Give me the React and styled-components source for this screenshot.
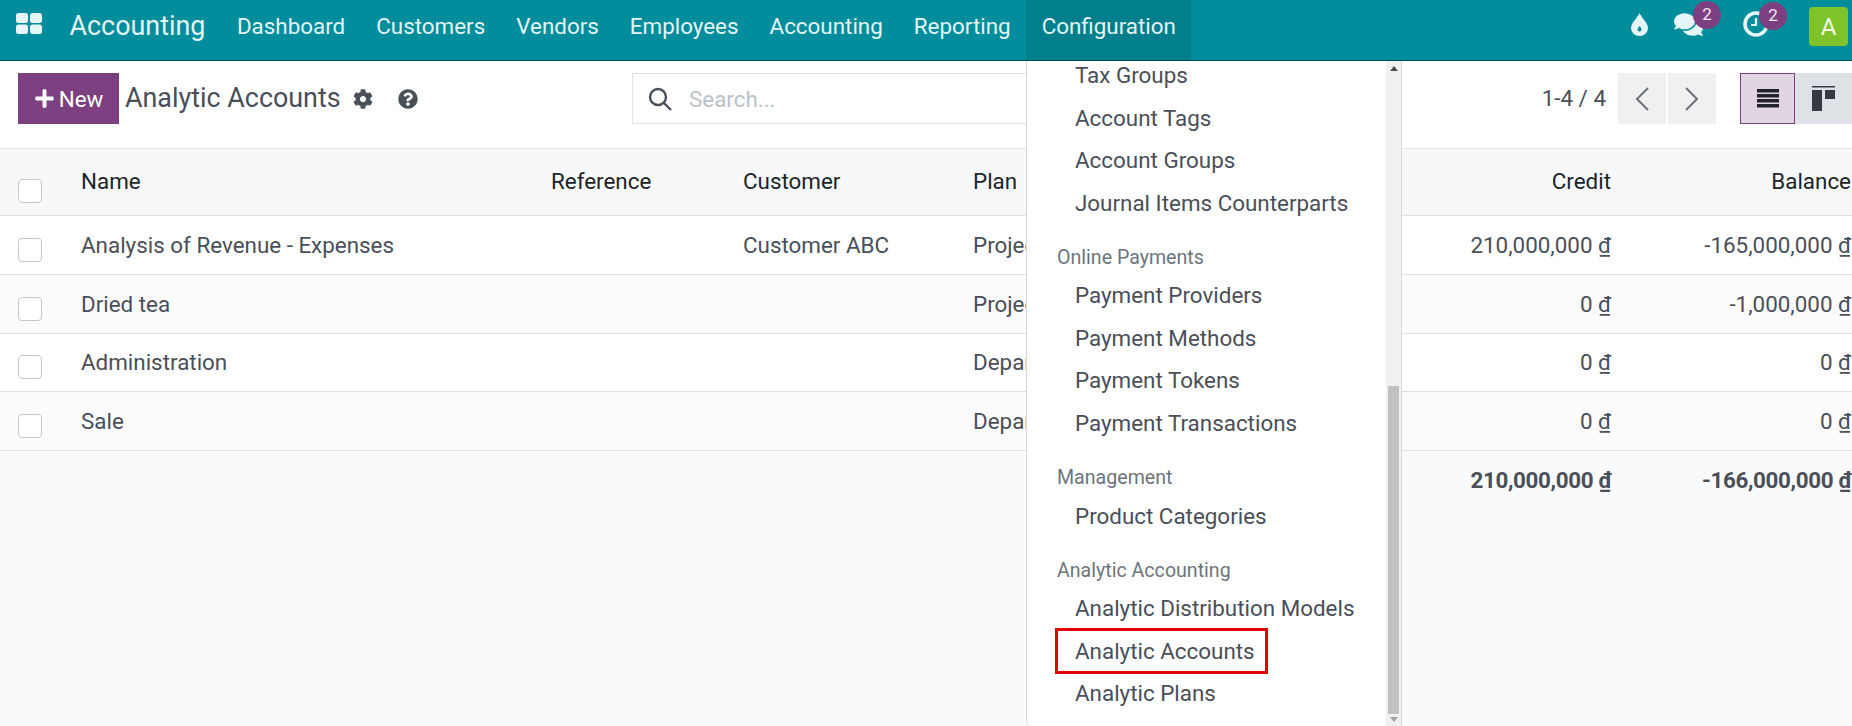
import React from "react";
import styled, { createGlobalStyle } from "styled-components";
import { FaPlus, FaCog, FaQuestionCircle, FaComments } from "react-icons/fa";

const GlobalStyle = createGlobalStyle`
  html, body {
    margin: 0;
    padding: 0;
    overflow: hidden;
    background: #f9fafb;
  }
  * {
    box-sizing: border-box;
  }
  body {
    font-family: Roboto, "Liberation Sans", sans-serif;
    font-size: 22.4px;
    color: #4a4f59;
  }
`;

const Page = styled.div`
  position: relative;
  width: 1852px;
  height: 726px;
  overflow: hidden;
`;

/* top bar */
const Navbar = styled.header`
  display: flex;
  align-items: center;
  height: 61px;
  padding: 0 4px 0 16px;
  background: #018d9b;
  border-bottom: 1px solid #014a52;
  color: #e2f5f7;
`;

const AppsIcon = styled.svg`
  width: 26px;
  height: 21px;
  margin-top: -13px;
  fill: #e4f6f7;
`;

const Brand = styled.span`
  margin-left: 27.5px;
  margin-right: 16px;
  margin-top: -8px;
  font-size: 26.88px;
`;

const NavItem = styled.a`
  display: flex;
  align-items: center;
  height: 60px;
  padding: 0 15.5px 8px;
  background: ${({ $open }) => ($open ? "#017f8c" : "transparent")};
`;

const Systray = styled.div`
  display: flex;
  align-items: center;
  margin-left: auto;
  height: 60px;
`;

const TrayItem = styled.div`
  position: relative;
  display: flex;
  margin-left: ${({ $gap }) => $gap}px;
  margin-top: -12px;
  color: #e4f6f7;
`;

const Badge = styled.span`
  position: absolute;
  top: -9px;
  left: ${({ $left }) => $left}px;
  width: 28px;
  height: 28px;
  border-radius: 50%;
  background: #7c4080;
  color: #f3e6f4;
  font-size: 17px;
  line-height: 26px;
  text-align: center;
`;

const Avatar = styled.div`
  display: flex;
  align-items: center;
  justify-content: center;
  width: 39px;
  height: 39px;
  margin-left: 40px;
  margin-top: -7px;
  border-radius: 4px;
  background: #7fc32a;
  color: #f2f9e6;
  font-size: 24px;
`;

/* control panel */
const ControlPanel = styled.div`
  display: grid;
  grid-template-columns: 614px 640px 1fr;
  height: 88px;
  padding: 12px 0 0 18px;
  background: #fff;
  border-bottom: 1px solid #dee2e6;
`;

const TitleGroup = styled.div`
  display: flex;
  align-items: flex-start;
`;

const NewButton = styled.button`
  display: flex;
  align-items: center;
  justify-content: center;
  gap: 4px;
  width: 101px;
  height: 51px;
  padding: 0;
  border: 0;
  background: #7c4080;
  color: #fff;
  font: inherit;
`;

const Title = styled.h1`
  margin: 0 0 0 6px;
  font-size: 26.88px;
  font-weight: 400;
  line-height: 51px;
  color: #4a4f59;
`;

const TitleIcon = styled.span`
  display: flex;
  align-items: center;
  height: 51px;
  margin-left: ${({ $gap }) => $gap}px;
  font-size: 20px;
  color: #495057;
`;

const SearchBox = styled.div`
  display: flex;
  align-items: center;
  gap: 17px;
  height: 51px;
  padding-left: 15px;
  border: 1px solid #dee2e6;
  color: #bcc2c9;
`;

const PanelRight = styled.div`
  display: flex;
  align-items: flex-start;
  justify-content: flex-end;
`;

const PagerText = styled.span`
  line-height: 51px;
  margin-right: 12px;
`;

const PagerButton = styled.button`
  display: flex;
  align-items: center;
  justify-content: center;
  width: 48px;
  height: 51px;
  margin-right: 2px;
  padding: 0;
  border: 0;
  background: #eef0f2;
`;

const ViewButton = styled.button`
  display: flex;
  align-items: center;
  justify-content: center;
  width: ${({ $active }) => ($active ? "55px" : "57px")};
  height: 51px;
  margin-left: ${({ $active }) => ($active ? "22px" : "0")};
  padding: 0;
  border: ${({ $active }) => ($active ? "1px solid #7c4080" : "0")};
  background: ${({ $active }) => ($active ? "#e2d5e3" : "#dee2e6")};
`;

/* list view */
const Row = styled.div`
  display: grid;
  grid-template-columns: 81px 470px 192px 230px 408px 230px 240px 1fr;
  align-items: center;
  height: ${({ $height }) => $height}px;
  padding-bottom: ${({ $head }) => ($head ? "2px" : "0")};
  background: ${({ $bg }) => $bg};
  border-bottom: ${({ $last }) => ($last ? "0" : "1px solid #dee2e6")};
  color: ${({ $head }) => ($head ? "#212529" : "#4a4f59")};
  font-weight: ${({ $bold }) => ($bold ? 700 : 400)};
  letter-spacing: ${({ $bold }) => ($bold ? "-0.35px" : "normal")};
`;

const CheckCell = styled.div`
  display: flex;
  padding: ${({ $offset }) => $offset}px 0 0 18px;
`;

const Checkbox = styled.span`
  display: block;
  width: 24px;
  height: 24px;
  border: 1px solid #c4c8cc;
  border-radius: 4px;
  background: #fff;
`;

const Cell = styled.div`
  white-space: nowrap;
`;

/* the menu covers this column, so its text stops at the menu's edge */
const PlanCell = styled(Cell)`
  max-width: 53px;
  overflow: hidden;
`;

const Amount = styled.div`
  text-align: right;
  white-space: nowrap;
`;

/* configuration menu */
const Dropdown = styled.div`
  position: absolute;
  top: 61px;
  left: 1026px;
  display: flex;
  width: 376px;
  height: 665px;
  overflow: hidden;
  background: #fff;
  border-left: 1px solid #d8dadd;
  border-right: 1px solid #d8dadd;
  border-bottom-left-radius: 6px;
`;

const MenuList = styled.div`
  flex: 1;
  margin-top: -7px;
  padding-left: 30px;
`;

const MenuHeader = styled.div`
  height: 33.5px;
  margin-top: 16.8px;
  font-size: 19.6px;
  line-height: 33.5px;
  color: #6c757d;
`;

const MenuItem = styled.div`
  position: relative;
  width: fit-content;
  height: 42.5px;
  margin-left: 18px;
  line-height: 42.5px;
  white-space: nowrap;

  ${({ $marked }) =>
    $marked &&
    `
    &::after {
      content: "";
      position: absolute;
      inset: -1.5px -13px -1.5px -20px;
      border: 3px solid #e30000;
    }
  `}
`;

const Scrollbar = styled.div`
  display: flex;
  flex-direction: column;
  align-items: center;
  width: 15px;
  padding: 5px 0 4px;
  background: #f1f1f1;
`;

const ScrollThumb = styled.div`
  width: 11px;
  height: 328px;
  margin-top: auto;
  margin-bottom: 3px;
  background: #c1c1c1;
`;

const ScrollArrow = styled.span`
  width: 0;
  height: 0;
  border-left: 4px solid transparent;
  border-right: 4px solid transparent;
  border-top: ${({ $down }) => ($down ? "5px solid #a3a3a3" : "0")};
  border-bottom: ${({ $down }) => ($down ? "0" : "5px solid #505050")};
`;

const navLinks = ["Dashboard", "Customers", "Vendors", "Employees", "Accounting", "Reporting"];

const rows = [
  { name: "Analysis of Revenue - Expenses", customer: "Customer ABC", plan: "Projects", credit: "210,000,000", balance: "-165,000,000" },
  { name: "Dried tea", customer: "", plan: "Projects", credit: "0", balance: "-1,000,000" },
  { name: "Administration", customer: "", plan: "Departments", credit: "0", balance: "0" },
  { name: "Sale", customer: "", plan: "Departments", credit: "0", balance: "0" },
];

const menu = [
  { items: ["Tax Groups", "Account Tags", "Account Groups", "Journal Items Counterparts"] },
  { title: "Online Payments", items: ["Payment Providers", "Payment Methods", "Payment Tokens", "Payment Transactions"] },
  { title: "Management", items: ["Product Categories"] },
  { title: "Analytic Accounting", items: ["Analytic Distribution Models", "Analytic Accounts", "Analytic Plans"] },
];

const money = (value) => `${value}\u00a0₫`;

const Chevron = ({ left }) => (
  <svg width="14" height="24" viewBox="0 0 14 24" fill="none" stroke="#6d7075" strokeWidth="2">
    <polyline points={left ? "13,1 2,12 13,23" : "1,1 12,12 1,23"} />
  </svg>
);

const App = () => {
  return (
    <Page>
      <GlobalStyle />
      <Navbar>
        <AppsIcon viewBox="0 0 26 21">
          <rect x="0" y="0" width="12" height="10" rx="2.5" />
          <rect x="14" y="0" width="12" height="10" rx="2.5" />
          <rect x="0" y="11.5" width="12" height="9.5" rx="2.5" />
          <rect x="14" y="11.5" width="12" height="9.5" rx="2.5" />
        </AppsIcon>
        <Brand>Accounting</Brand>
        {navLinks.map((link) => (
          <NavItem key={link}>{link}</NavItem>
        ))}
        <NavItem $open>Configuration</NavItem>
        <Systray>
          <TrayItem $gap={0}>
            <svg width="17" height="23" viewBox="0 0 17 23" fill="#e4f6f7">
              <path
                fillRule="evenodd"
                d="M8.5 0C10 4 17 10 17 15a8.5 8 0 0 1-17 0C0 10 7 4 8.5 0ZM8.5 13c-1 1.4-2 2.4-2 3.6a2 2 0 0 0 4 0c0-1.2-1-2.2-2-3.6Z"
              />
            </svg>
          </TrayItem>
          <TrayItem $gap={26}>
            <FaComments size={29} />
            <Badge $left={19}>2</Badge>
          </TrayItem>
          <TrayItem $gap={40}>
            <svg width="26" height="26" viewBox="0 0 26 26" fill="none" stroke="#e4f6f7">
              <circle cx="13" cy="13" r="11" strokeWidth="3.6" />
              <polyline points="13,7 13,14 8,14" strokeWidth="2.2" />
            </svg>
            <Badge $left={16}>2</Badge>
          </TrayItem>
          <Avatar>A</Avatar>
        </Systray>
      </Navbar>

      <ControlPanel>
        <TitleGroup>
          <NewButton>
            <FaPlus size={21} />
            New
          </NewButton>
          <Title>Analytic Accounts</Title>
          <TitleIcon $gap={12}>
            <FaCog />
          </TitleIcon>
          <TitleIcon $gap={25}>
            <FaQuestionCircle />
          </TitleIcon>
        </TitleGroup>
        <SearchBox>
          <svg width="24" height="24" viewBox="0 0 24 24" fill="none" stroke="#495057" strokeWidth="2.4">
            <circle cx="10" cy="10" r="8" />
            <line x1="15.8" y1="15.8" x2="23" y2="23" />
          </svg>
          Search...
        </SearchBox>
        <PanelRight>
          <PagerText>1-4 / 4</PagerText>
          <PagerButton>
            <Chevron left />
          </PagerButton>
          <PagerButton>
            <Chevron />
          </PagerButton>
          <ViewButton $active>
            <svg width="22" height="19" viewBox="0 0 22 19" fill="#212529">
              <rect y="0" width="22" height="3.5" />
              <rect y="5" width="22" height="3.5" />
              <rect y="10" width="22" height="3.5" />
              <rect y="15" width="22" height="3.5" />
            </svg>
          </ViewButton>
          <ViewButton>
            <svg width="23" height="25" viewBox="0 0 23 25" fill="#343a40">
              <rect y="0" width="23" height="1.5" />
              <rect y="4" width="10" height="21" />
              <rect x="13" y="4" width="10" height="9" />
            </svg>
          </ViewButton>
        </PanelRight>
      </ControlPanel>

      <Row $head $height={67} $bg="#f7f8fa">
        <CheckCell $offset={20}>
          <Checkbox />
        </CheckCell>
        <Cell>Name</Cell>
        <Cell>Reference</Cell>
        <Cell>Customer</Cell>
        <PlanCell>Plan</PlanCell>
        <Amount>Credit</Amount>
        <Amount>Balance</Amount>
      </Row>
      {rows.map((row, i) => (
        <Row key={row.name} $height={i === 0 ? 59 : 58.5} $bg={i % 2 ? "#fbfbfc" : "#fff"}>
          <CheckCell $offset={10}>
            <Checkbox />
          </CheckCell>
          <Cell>{row.name}</Cell>
          <Cell />
          <Cell>{row.customer}</Cell>
          <PlanCell>{row.plan}</PlanCell>
          <Amount>{money(row.credit)}</Amount>
          <Amount>{money(row.balance)}</Amount>
        </Row>
      ))}
      <Row $last $bold $height={58} $bg="#f9fafb">
        <Cell />
        <Cell />
        <Cell />
        <Cell />
        <Cell />
        <Amount>{money("210,000,000")}</Amount>
        <Amount>{money("-166,000,000")}</Amount>
      </Row>

      <Dropdown>
        <MenuList>
          {menu.map((section) => (
            <div key={section.items[0]}>
              {section.title && <MenuHeader>{section.title}</MenuHeader>}
              {section.items.map((item) => (
                <MenuItem key={item} $marked={item === "Analytic Accounts"}>
                  {item}
                </MenuItem>
              ))}
            </div>
          ))}
        </MenuList>
        <Scrollbar>
          <ScrollArrow />
          <ScrollThumb />
          <ScrollArrow $down />
        </Scrollbar>
      </Dropdown>
    </Page>
  );
};

export default App;
